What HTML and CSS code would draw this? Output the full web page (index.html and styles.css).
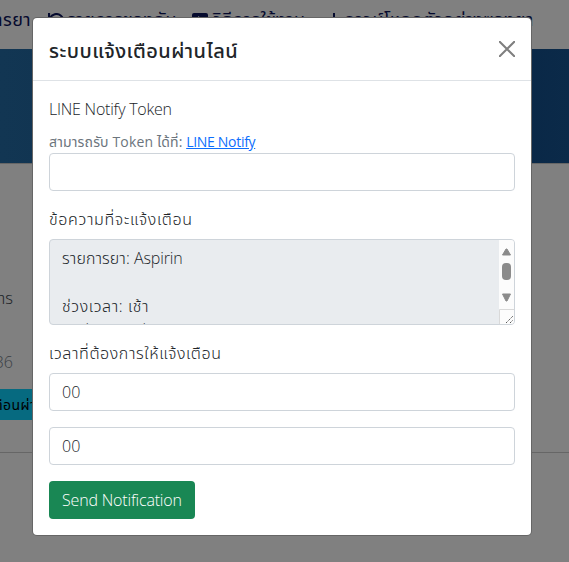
FILE: index.html
```html
<!DOCTYPE html>
<html lang="th">
<head>
<meta charset="utf-8">
<title>ระบบแจ้งเตือนผ่านไลน์</title>
<link rel="stylesheet" href="styles.css">
</head>
<body>
<div class="page">
  <nav class="nav">
    <span class="nav-item n1">การยา</span>
    <svg class="nav-icon history" viewBox="0 0 16 16"><path d="M1 0v5h5" fill="none" stroke="currentColor" stroke-width="2.200"/><path d="M2 5A7 7 0 1 1 2 11M8.500 4v5l3 1" fill="none" stroke="currentColor" stroke-width="2"/></svg>
    <span class="nav-item n2">รายการของฉัน</span>
    <svg class="nav-icon video" viewBox="0 0 16 16"><rect y="0" width="16" height="13" rx="2" fill="currentColor"/><path d="M6 3l5 3-5 3z" fill="#808080"/></svg>
    <span class="nav-item n3">วิธีการใช้งาน</span>
    <svg class="nav-icon download" viewBox="0 0 16 16"><path d="M8 0v11M3 5l5 5 5-5M1 14h14" fill="none" stroke="currentColor" stroke-width="2"/></svg>
    <span class="nav-item n4">ดาวน์โหลดตัวอย่างซองยา</span>
  </nav>
  <div class="hero"></div>
  <main class="content">
    <p class="crumb">การ</p>
    <p class="number">36</p>
    <div class="cyan">ตือนผ่าน</div>
    <hr class="rule">
  </main>
</div>
<section class="modal" role="dialog">
  <header class="modal-header">
    <h5 class="title"><span class="t-title">ระบบแจ้งเตือนผ่านไลน์</span></h5>
    <svg class="close" viewBox="0 0 16 16"><path d="M.7.7l14.6 14.6M15.3.7L.7 15.3" stroke="#7f7f7f" stroke-width="2" stroke-linecap="round"/></svg>
  </header>
  <div class="modal-body">
    <div class="label"><span class="t-token">LINE Notify Token</span></div>
    <div class="hint"><span class="t-hint">สามารถรับ Token ได้ที่:</span> <a class="link">LINE Notify</a></div>
    <div class="field token"></div>
    <div class="label"><span class="t-msg">ข้อความที่จะแจ้งเตือน</span></div>
    <div class="message">
      <div class="lines">
        <div><span class="t-drug">รายการยา:</span> <span class="t-name">Aspirin</span></div>
        <div>&nbsp;</div>
        <div><span class="t-when">ช่วงเวลา: เช้า</span></div>
        <div class="last"><span class="t-date">วันที่เริ่ม: วันที่</span></div>
      </div>
      <div class="scroll">
        <svg width="15" height="69" viewBox="0 0 15 69"><path d="M3.500 15L7 9h1l3.500 6zM3.500 54L7 61h1l3.500-7z" fill="#8b8b8b" stroke="#8b8b8b" stroke-linejoin="round"/><rect x="3" y="23" width="9" height="17" rx="4" fill="#8b8b8b"/></svg>
        <svg class="grip" width="15" height="15" viewBox="0 0 15 15"><path d="M.5 15V.5H15" fill="none" stroke="#d9d9d9"/><path d="M7 14l7-7M11 14l3-3" stroke="#555" stroke-dasharray="1.400 .8"/></svg>
      </div>
    </div>
    <div class="label"><span class="t-time">เวลาที่ต้องการให้แจ้งเตือน</span></div>
    <div class="field hour">00</div>
    <div class="field minute">00</div>
    <button class="send"><span class="t-send">Send Notification</span></button>
  </div>
</section>
</body>
</html>
```
FILE: styles.css
```css
* { box-sizing: border-box; }
body {
  margin: 0;
  width: 569px;
  height: 562px;
  overflow: hidden;
  font-family: "Open Sans", "Noto Sans Thai", "Noto Sans", sans-serif;
  font-weight: 300;
  font-size: 16px;
  line-height: 24px;
  color: #212529;
}
span, a { white-space: nowrap; }
.page { height: 562px; background: #808080; overflow: hidden; }
.nav { display: flex; height: 49px; padding-top: 7px; color: #050a2e; font-weight: 400; font-size: 18px; letter-spacing: .4px; }
.nav-item { flex: none; }
.n1 { width: 31px; display: flex; justify-content: flex-end; }
.nav-icon { width: 16px; height: 16px; margin-top: 6px; flex: none; }
.history { margin-left: 17px; }
.n2 { width: 108px; margin-left: 3px; }
.video { margin-left: 17px; }
.n3 { width: 98px; margin-left: 5px; }
.download { margin-left: 15px; }
.n4 { width: 192px; margin-left: 2px; }
.hero { height: 115px; background: linear-gradient(90deg, #123653, #092746 90%, #0b2a49); border-bottom: 1px solid #666; }
.crumb { margin: 122px 0 0; width: 13px; height: 24px; display: flex; justify-content: flex-end; white-space: nowrap; }
.number { margin: 40px 0 0; width: 13px; height: 24px; display: flex; justify-content: flex-end; color: #3a3f44; }
.cyan { margin-top: 15px; width: 45px; height: 31px; padding-top: 4px; background: #066a80; color: #000; font-size: 14px; font-weight: 400; letter-spacing: .4px; display: flex; justify-content: flex-end; white-space: nowrap; }
.rule { margin: 32px 0 0; border: 0; height: 1px; background: #666; }
.modal {
  position: absolute;
  left: 33px;
  top: 18px;
  width: 498px;
  height: 517px;
  background: #fff;
  border-radius: 4px;
  box-shadow: 0 0 0 1px #666;
}
.modal-header { display: flex; justify-content: space-between; height: 63px; padding: 16px; border-bottom: 1px solid #dee2e6; }
.title { margin: 0; font-size: 20px; font-weight: 500; line-height: 34px; }
.close { width: 16px; height: 16px; margin-top: 7px; }
.modal-body { padding: 16px; }
.label { height: 24px; margin-bottom: 8px; }
.label:first-child { margin-bottom: 9px; }
.hint { height: 21px; font-size: 14px; line-height: 23px; color: #6c757d; margin-bottom: 2px; }
.t-title { letter-spacing: .45px; }
.t-token { letter-spacing: -.23px; }
.t-hint { letter-spacing: .15px; font-weight: 400; }
.t-msg { letter-spacing: .65px; }
.t-when { letter-spacing: .6px; }
.t-drug { letter-spacing: .1px; }
.t-name { letter-spacing: -.15px; }
.t-time { letter-spacing: .6px; }
.t-send { letter-spacing: -.18px; }
.link { color: #0d6efd; text-decoration: underline; font-weight: 400; letter-spacing: -.3px; }
.last { padding-top: 3px; }
.field { height: 38px; padding: 6px 12px; border: 1px solid #ced4da; border-radius: 4px; margin-bottom: 16px; }
.message { display: flex; height: 86px; border: 1px solid #ced4da; border-radius: 4px; overflow: hidden; background: #e9ecef; margin-bottom: 16px; }
.lines { flex: 1; padding: 6px 12px; }
.scroll { display: flex; flex-direction: column; width: 15px; background: #fcfcfc; }
.send { display: block; width: 146px; height: 38px; padding: 0 0 0 13px; border: 0; border-radius: 4px; background: #198754; color: #fff; font: inherit; text-align: left; }
```
